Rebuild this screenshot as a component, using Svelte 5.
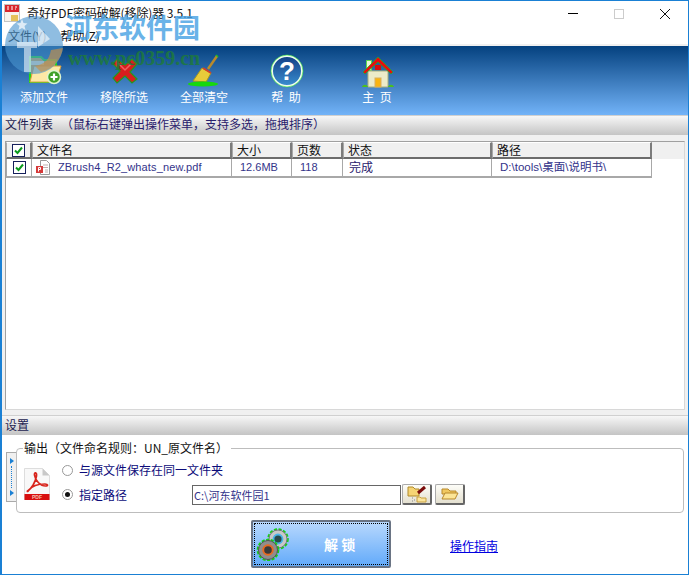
<script>
  const tools = [
    { id: "add", label: "添加文件", width: 84 },
    { id: "remove", label: "移除所选", width: 76 },
    { id: "clear", label: "全部清空", width: 84 },
    { id: "help", label: "帮  助", width: 80 },
    { id: "home", label: "主  页", width: 102 },
  ];
  const columns = [
    { label: "文件名", width: 200 },
    { label: "大小", width: 60 },
    { label: "页数", width: 51 },
    { label: "状态", width: 149 },
    { label: "路径", width: 160 },
  ];
</script>

<div class="window">
  <header class="titlebar">
    <svg class="app-icon" width="16" height="18" viewBox="0 0 16 18">
      <rect x="0.5" y="0.5" width="15" height="17" fill="#f7f3ec" stroke="#c4c4c4" />
      <rect x="1" y="1" width="14" height="7" fill="#d8262c" />
      <path d="M3 3h2M7 3h2M11 3h2M3 5h2M7 5h2M11 5h1" stroke="#fff" />
      <rect x="7" y="11" width="7" height="6" fill="#e6c25a" />
    </svg>
    <span class="app-title">奇好PDF密码破解(移除)器 3.5.1</span>
    <div class="win-controls">
      <svg width="46" height="24" viewBox="0 0 46 24"><path d="M18 12.5h10" stroke="#000" /></svg>
      <svg width="46" height="24" viewBox="0 0 46 24"><rect x="18.5" y="8.5" width="9" height="9" fill="none" stroke="#ccc" /></svg>
      <svg width="46" height="24" viewBox="0 0 46 24"><path d="M18 8l10 10M28 8l-10 10" stroke="#111" fill="none" /></svg>
    </div>
  </header>

  <nav class="menubar">
    <span>文件(Y)</span>
    <span>帮助(Z)</span>
  </nav>

  <section class="toolbar">
    {#each tools as tool}
      <button class="tool" style="width: {tool.width}px">
        <svg width="36" height="34" viewBox="0 0 36 34">
          {#if tool.id === "add"}
            <path d="M4 3h11l3 3h12v22H4z" fill="#e8a63c" stroke="#1ed818" stroke-width="2" />
            <path d="M5 7h13v4H5z" fill="#fbe7c0" />
            <path d="M8 12h27l-5 16H4z" fill="#fde8a6" stroke="#d8a040" />
            <circle cx="28" cy="23" r="6.5" fill="#3fa028" stroke="#dff5d0" stroke-width="1.5" />
            <path d="M28 19.5v7M24.5 23h7" stroke="#fff" stroke-width="2.2" />
          {:else if tool.id === "remove"}
            <path d="M7 10l4-5 8 6 7-6 5 5-7 8 7 7-5 4-7-7-8 7-4-5 7-7z" fill="#d81e1e" stroke="#249a1c" stroke-width="1.2" />
            <path d="M12 9l7 7 6-6" fill="none" stroke="#f06060" stroke-width="1.5" />
          {:else if tool.id === "clear"}
            <path d="M31 2L22 15" stroke="#b88a2c" stroke-width="2.5" />
            <path d="M30 1l2 2" stroke="#22c020" stroke-width="1.5" />
            <path d="M16 14l9 5-5 9-13-1z" fill="#e8cc3a" stroke="#a89a1c" />
            <path d="M17 14l8 5" stroke="#d0402c" stroke-width="2" />
            <ellipse cx="17" cy="30" rx="15" ry="2.6" fill="#16d80e" />
          {:else if tool.id === "help"}
            <defs>
              <linearGradient id="helpFill" x1="0" y1="0" x2="0" y2="1">
                <stop offset="0" stop-color="#123f86" />
                <stop offset="1" stop-color="#3a8ed0" />
              </linearGradient>
            </defs>
            <circle cx="19" cy="17" r="15" fill="url(#helpFill)" stroke="#eefcee" stroke-width="2" />
            <circle cx="19" cy="17" r="16" fill="none" stroke="#2ee82e" stroke-width="0.6" />
            <text x="19" y="26" class="qmark">?</text>
          {:else}
            <path d="M7.500 6.500h5v10h-5z" fill="#e8f6da" stroke="#5ad84c" />
            <path d="M9 17h20v16H9z" fill="#ecebca" stroke="#a8b080" />
            <path d="M4 18L19 3l15 15-2 2L19 8 6 20z" fill="#ea0c0c" stroke="#20b818" stroke-width="0.7" />
            <rect x="16" y="11" width="6" height="5" fill="#d80c0c" />
            <rect x="16" y="24" width="6" height="9" fill="#fab410" stroke="#d8b060" />
            <path d="M3 33c1-3 5-3 6 0zM29 33c1-3 5-3 6 0z" fill="#4cc01c" />
          {/if}
        </svg>
        <span>{tool.label}</span>
      </button>
    {/each}
  </section>

  <div class="band list-band">文件列表&nbsp;&nbsp;&nbsp;<span class="hint">（鼠标右键弹出操作菜单，支持多选，拖拽排序）</span></div>

  <section class="list-wrap">
    <div class="list">
      <div class="head-row">
        <div class="head-cell check-col">
          <span class="check"><svg width="9" height="9" viewBox="0 0 9 9"><path d="M1 4.500l2.500 2.500L8 1.500" fill="none" stroke="#0a9a1c" stroke-width="2" /></svg></span>
        </div>
        {#each columns as col}
          <div class="head-cell" style="width: {col.width}px">{col.label}</div>
        {/each}
      </div>
      <div class="row">
        <div class="cell check-col">
          <span class="check"><svg width="9" height="9" viewBox="0 0 9 9"><path d="M1 4.500l2.500 2.500L8 1.500" fill="none" stroke="#0a9a1c" stroke-width="2" /></svg></span>
        </div>
        <div class="cell name" style="width: 200px">
          <svg width="15" height="15" viewBox="0 0 15 15">
            <path d="M4.500 0.500h6l3 3v11h-9z" fill="#fff" stroke="#999" />
            <path d="M7 5h5M7 7.500h5M9 10h3M9 12h3" stroke="#c0b0b0" />
            <rect x="0" y="6" width="7" height="7" fill="#d63a3a" />
            <path d="M2.500 11.500v-4h2v2h-2" stroke="#fff" fill="none" />
          </svg>
          <span>ZBrush4_R2_whats_new.pdf</span>
        </div>
        <div class="cell size" style="width: 60px">12.6MB</div>
        <div class="cell count" style="width: 51px">118</div>
        <div class="cell status" style="width: 149px">完成</div>
        <div class="cell path" style="width: 160px">D:\tools\桌面\说明书\</div>
      </div>
    </div>
  </section>

  <div class="band settings-band">设置</div>

  <section class="settings">
    <div class="collapse">
      <i class="tri"></i>
      <i class="dots"></i>
      <i class="tri"></i>
    </div>
    <fieldset class="output">
      <legend>输出（文件命名规则：UN_原文件名）</legend>
      <svg class="pdf-icon" width="26" height="32" viewBox="0 0 26 32">
        <path d="M0.500 0.500h18l7 7v24h-25z" fill="#f8f8f8" stroke="#ddd" />
        <path d="M18.500 0.500v7h7z" fill="#c8c8c8" />
        <path d="M3.500 23c4-2 8-9 9-15 .5-4-2.500-4-2-1 1 6 6 11 11 11 3 0 2.500-2-.5-2-6 0-13 2-16 6-1 1.500-2 2-1.500 1z" fill="none" stroke="#d8241c" stroke-width="1.700" />
        <rect x="0.500" y="26" width="25" height="6" fill="#d80f0f" />
        <text x="13" y="31" class="pdf-text">PDF</text>
      </svg>
      <div class="options">
        <label class="opt"><span class="radio"></span>与源文件保存在同一文件夹</label>
        <div class="path-row">
          <label class="opt sel"><span class="radio on"></span>指定路径</label>
          <div class="path-input">C:\河东软件园1</div>
          <button class="small-btn" aria-label="选择">
            <svg width="22" height="18" viewBox="0 0 22 18">
              <path d="M2 2h5l2 2h4v7H2z" fill="#f6d474" stroke="#b08a2a" />
              <path d="M12 8l7-6" stroke="#7a0c0c" stroke-width="3" />
              <path d="M11 12h3l1 1h5v4h-9z" fill="#fbe59c" stroke="#c8a040" />
              <path d="M6 13h1M8 15h1M6 16h1" stroke="#888" />
            </svg>
          </button>
          <button class="small-btn second" aria-label="打开">
            <svg width="18" height="16" viewBox="0 0 18 16">
              <path d="M1 3h6l2 2h6v3H1z" fill="#f0c860" stroke="#b8882a" />
              <path d="M1 13l3-6h13l-3 6z" fill="#fce596" stroke="#b8882a" />
            </svg>
          </button>
        </div>
      </div>
    </fieldset>
  </section>

  <footer class="actions">
    <button class="unlock">
      <svg width="34" height="34" viewBox="0 0 34 34">
        <circle cx="22" cy="12" r="9.500" fill="none" stroke="#16d016" stroke-width="2.600" stroke-dasharray="3 1.500" />
        <circle cx="22" cy="12" r="9" fill="#c8c8c8" stroke="#777" />
        <circle cx="22" cy="12" r="4.500" fill="#2a4a4a" stroke="#48b4e8" stroke-width="1.800" />
        <circle cx="12" cy="23" r="10" fill="none" stroke="#16d016" stroke-width="2.600" stroke-dasharray="3 1.500" />
        <circle cx="12" cy="23" r="9.500" fill="#8e8e8e" stroke="#555" />
        <circle cx="12" cy="23" r="4.800" fill="#3a3a3a" stroke="#e86a20" stroke-width="2" />
      </svg>
      <span>解 锁</span>
    </button>
    <a class="guide" href="#guide">操作指南</a>
  </footer>

  <div class="watermark">
    <svg width="60" height="62" viewBox="0 0 60 62">
      <circle cx="29" cy="31" r="29" fill="#4a94cf" fill-opacity="0.62" />
      <path d="M36 58A29 29 0 0 0 58 34L46 36C44 46 40 50 30 52z" fill="#c89048" fill-opacity="0.65" />
      <path d="M12 28h20v6h-6v24h-7V34h-7z" fill="#fff" fill-opacity="0.55" />
      <path d="M33 12l12 13-12 8z" fill="#fff" fill-opacity="0.6" />
      <path d="M17 5l1.500 4 4 .5-3 2.500 1 4-3.500-2-3.500 2 1-4-3-2.500 4-.5z" fill="#fff" fill-opacity="0.7" />
    </svg>
    <span class="wm-name">河东软件园</span>
    <span class="wm-url">www.pc0359.cn</span>
  </div>
</div>

<style>
  :global(body) {
    margin: 0;
    background: #fff;
  }

  .window {
    position: relative;
    width: 689px;
    height: 575px;
    box-sizing: border-box;
    border: 1px solid #1a80d4;
    border-left-width: 2px;
    display: flex;
    flex-direction: column;
    overflow: hidden;
    background: #fff;
    font-family: "Noto Sans CJK SC", "Liberation Sans", sans-serif;
    font-size: 12px;
    color: #111;
  }

  button {
    font-family: inherit;
  }

  .titlebar {
    height: 23px;
    display: flex;
    align-items: center;
    flex: none;
  }

  .app-icon {
    margin: 0 7px 0 2px;
  }

  .app-title {
    font-size: 12px;
    letter-spacing: -0.1px;
  }

  .win-controls {
    margin-left: auto;
    display: flex;
  }

  .menubar {
    height: 22px;
    box-sizing: border-box;
    flex: none;
    display: flex;
    gap: 14px;
    align-items: center;
    padding: 3px 0 0 6px;
    border-bottom: 2px solid #f0f0f0;
  }

  .toolbar {
    height: 69px;
    flex: none;
    display: flex;
    background: linear-gradient(#04417f, #72b3f8);
    align-items: flex-start;
  }

  .tool {
    border: 0;
    background: none;
    padding: 8px 0 0;
    display: flex;
    flex-direction: column;
    align-items: center;
    color: #fff;
    font-size: 12px;
    line-height: 16px;
    white-space: pre;
    gap: 1px;
  }

  .qmark {
    font: bold 26px "Liberation Sans", sans-serif;
    fill: #fff;
    text-anchor: middle;
  }

  .pdf-text {
    font: bold 5px "Liberation Sans", sans-serif;
    fill: #f4c0b0;
    text-anchor: middle;
  }

  .band {
    height: 20px;
    flex: none;
    display: flex;
    align-items: center;
    padding: 0 0 4px 3px;
    color: #1c1c50;
    font-size: 12px;
    background: linear-gradient(#f7f7f7, #c4c4c4);
    border-top: 1px solid #d0d0d0;
    box-sizing: border-box;
  }

  .settings-band {
    padding-bottom: 3px;
  }

  .hint {
    color: #28206c;
  }

  .list-wrap {
    flex: 1;
    background: #f0f0f0;
    padding: 6px 3px 5px 3px;
    display: flex;
    flex-direction: column;
  }

  .list {
    flex: 1;
    background: #fff;
    border-left: 1px solid #a0a0a0;
    border-top: 1px solid #a0a0a0;
    border-right: 1px solid #d8d8d8;
    border-bottom: 1px solid #d8d8d8;
  }

  .head-row {
    display: flex;
    height: 17px;
    background: #f0f0f0;
  }

  .head-cell {
    box-sizing: border-box;
    border-left: 1px solid #a8a8a8;
    border-top: 1px solid #fff;
    border-right: 2px solid #7c7c7c;
    border-bottom: 2px solid #6c6c6c;
    font-size: 12px;
    line-height: 14px;
    padding-left: 4px;
    color: #111;
  }

  .check-col {
    width: 26px;
    display: flex;
    align-items: center;
    justify-content: center;
    padding: 0;
  }

  .check {
    width: 11px;
    height: 11px;
    border: 1px solid #16205c;
    background: #fff;
    display: flex;
    align-items: center;
    justify-content: center;
  }

  .row {
    display: flex;
    height: 19px;
    width: 646px;
    border-bottom: 2px solid #a8a8a8;
    box-sizing: border-box;
  }

  .cell {
    box-sizing: border-box;
    border-right: 1px solid #a8a8a8;
    line-height: 17px;
    color: #28206c;
    white-space: nowrap;
    font-family: "Liberation Sans", "Noto Sans CJK SC", sans-serif;
    font-size: 11px;
  }

  .cell.check-col {
    border-left: 1px solid #a8a8a8;
  }

  .name {
    display: flex;
    align-items: center;
    gap: 7px;
    padding-left: 4px;
    color: #33338a;
    letter-spacing: 0.13px;
  }

  .size,
  .count {
    padding-left: 8px;
    color: #33338a;
  }

  .status {
    padding-left: 6px;
    font-size: 12px;
    line-height: 18px;
  }

  .path {
    padding-left: 8px;
    font-size: 11.5px;
    color: #33338a;
  }

  .settings {
    flex: none;
    height: 79px;
    display: flex;
    align-items: flex-start;
    padding: 5px 0 0 4px;
    box-sizing: border-box;
  }

  .collapse {
    width: 10px;
    height: 50px;
    margin-top: 12px;
    border: 1px solid #aaa;
    border-right: 0;
    background: #f0f0f0;
    display: flex;
    flex-direction: column;
    align-items: center;
    justify-content: space-between;
    padding: 5px 0;
    box-sizing: border-box;
    flex: none;
  }

  .tri {
    width: 0;
    height: 0;
    border-left: 4px solid #1a80d4;
    border-top: 3px solid transparent;
    border-bottom: 3px solid transparent;
  }

  .dots {
    flex: 1;
    margin: 2px 0;
    border-left: 1px dotted #1a80d4;
  }

  .output {
    margin: 0 4px 0 0;
    padding: 0 0 0 6px;
    flex: 1;
    height: 73px;
    box-sizing: border-box;
    border: 1px solid #bdbdbd;
    border-radius: 4px;
    display: flex;
    align-items: flex-start;
  }

  legend {
    padding: 0 3px 0 1px;
    line-height: 16px;
    color: #111;
  }

  .pdf-icon {
    margin: 12px 0 0 1px;
  }

  .options {
    margin-left: 12px;
    flex: 1;
  }

  .opt {
    display: flex;
    align-items: center;
    gap: 6px;
    color: #0c0c7a;
    font-size: 12px;
    line-height: 16px;
  }

  .options > .opt {
    margin-top: 6px;
  }

  .radio {
    width: 9px;
    height: 9px;
    border-radius: 50%;
    border: 1px solid #999;
    background: #fff;
    position: relative;
    display: block;
  }

  .radio.on::after {
    content: "";
    position: absolute;
    left: 2px;
    top: 2px;
    width: 5px;
    height: 5px;
    border-radius: 50%;
    background: #111;
  }

  .path-row {
    display: flex;
    align-items: center;
    margin-top: 6px;
  }

  .sel {
    width: 130px;
  }

  .path-input {
    box-sizing: border-box;
    width: 209px;
    height: 20px;
    border: 1px solid #666;
    font-size: 11px;
    line-height: 18px;
    padding-left: 1px;
    color: #33338a;
  }

  .small-btn {
    width: 30px;
    height: 21px;
    margin-left: 1px;
    padding: 0;
    display: flex;
    align-items: center;
    justify-content: center;
    border: 1px solid #aaa;
    border-right: 2px solid #666;
    border-bottom: 2px solid #666;
    border-radius: 2px;
    background: linear-gradient(#fdfdf8, #e4e0d0);
  }

  .small-btn.second {
    margin-left: 3px;
  }

  .actions {
    flex: none;
    height: 60px;
    box-sizing: border-box;
    display: flex;
    align-items: flex-start;
    padding: 6px 0 0 249px;
  }

  .unlock {
    width: 140px;
    height: 48px;
    padding: 0 0 0 3px;
    display: flex;
    align-items: center;
    border: 2px solid #6a7484;
    border-radius: 2px;
    outline: 1px dotted #000;
    outline-offset: -4px;
    background: linear-gradient(#b8d8fd, #62aafa);
    color: #fff;
    font-size: 14px;
    font-weight: 700;
  }

  .unlock span {
    margin-left: 34px;
  }

  .guide {
    margin: 18px 0 0 59px;
    color: #0000e0;
    font-size: 12px;
    line-height: 16px;
  }

  .watermark {
    position: absolute;
    left: 0;
    top: 0;
    pointer-events: none;
  }

  .watermark svg {
    position: absolute;
    left: 3px;
    top: 13px;
  }

  .wm-name {
    position: absolute;
    left: 63px;
    top: 6px;
    font: 700 27px/40px "Noto Sans CJK SC", sans-serif;
    color: #4aa3e4;
    opacity: 0.82;
    white-space: nowrap;
  }

  .wm-url {
    position: absolute;
    left: 66px;
    top: 45px;
    font: 700 20px/24px "Liberation Serif", serif;
    color: #1e7a3c;
    opacity: 0.85;
    white-space: nowrap;
  }
</style>
